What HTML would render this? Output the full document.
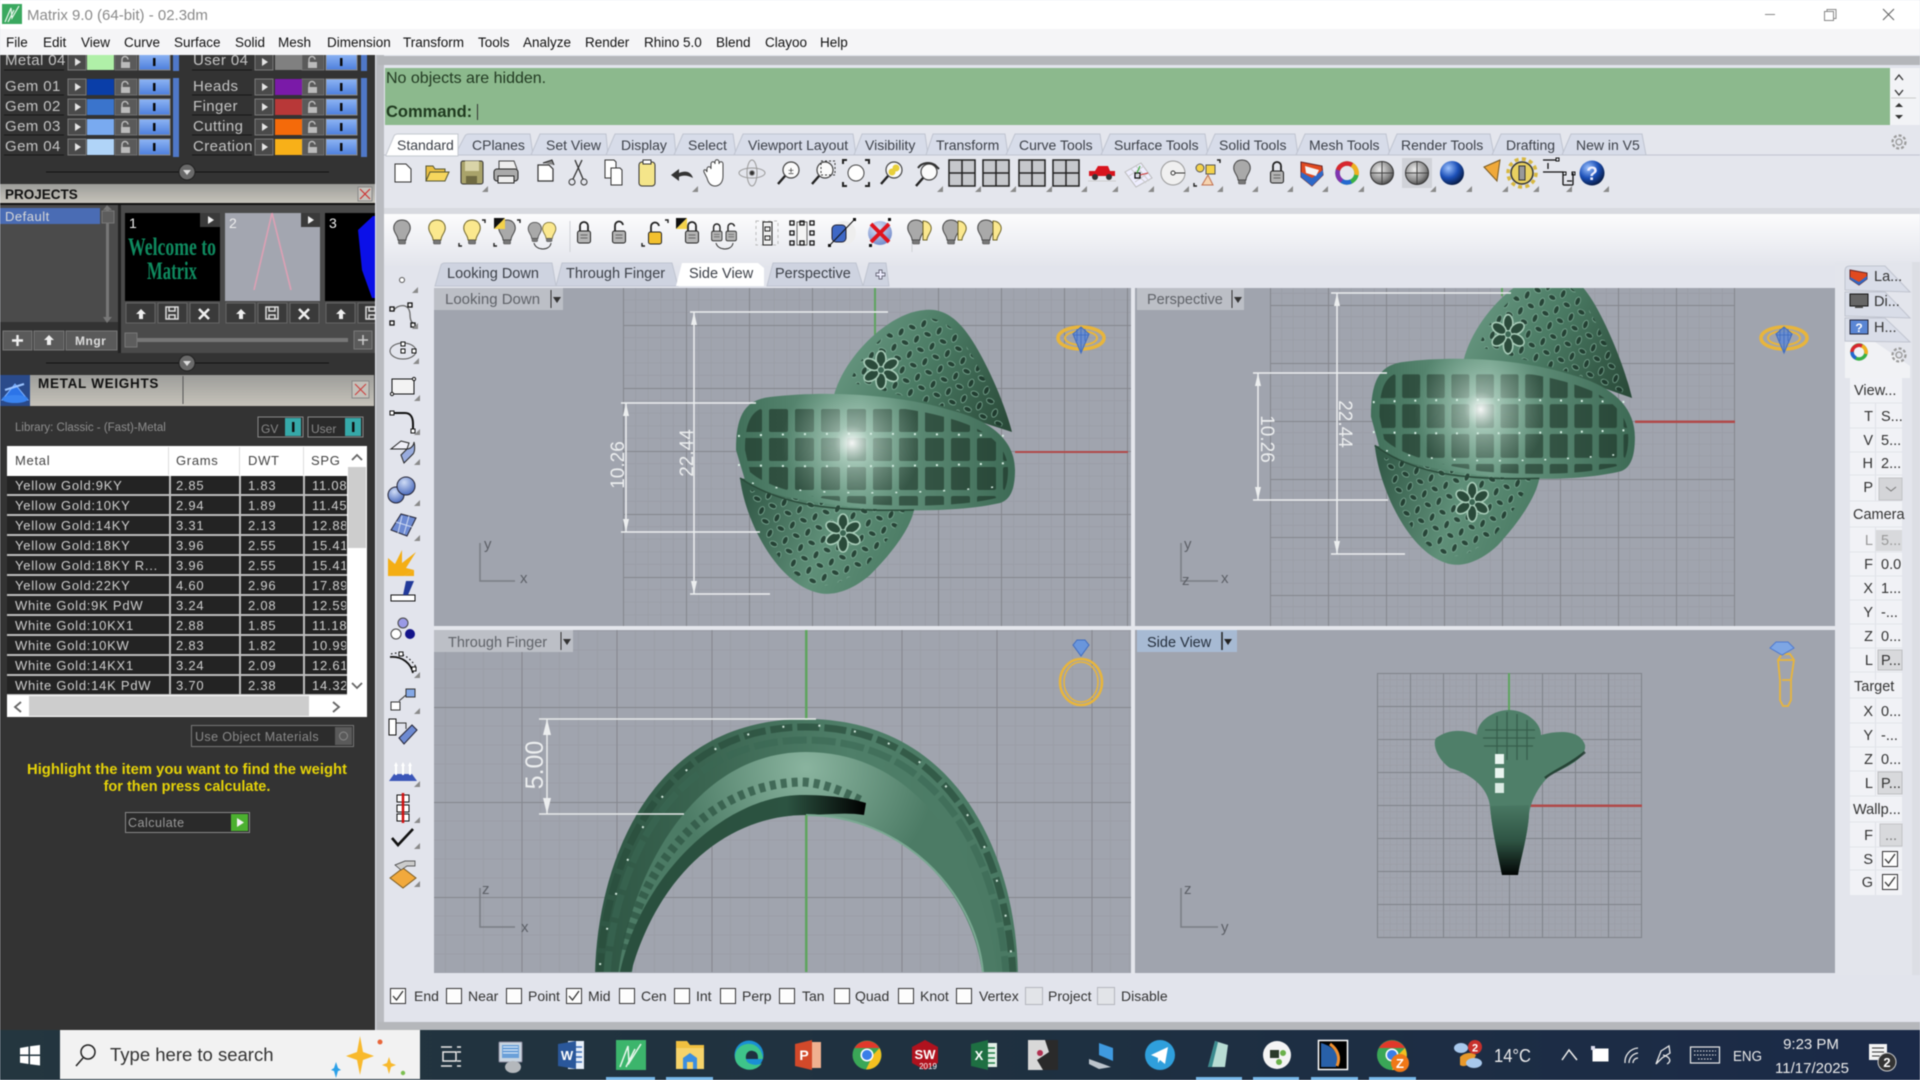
<!DOCTYPE html>
<html><head><meta charset="utf-8"><title>Matrix 9.0</title>
<style>
html,body{margin:0;padding:0;width:1920px;height:1080px;overflow:hidden;background:#e2e4ec}
svg{display:block;position:absolute;left:0;top:0;filter:blur(.4px)}
text{font-family:"Liberation Sans",sans-serif;font-size:14px;fill:#333;white-space:pre}
.m text{font-size:13.5px;fill:#111}
.lb text{font-size:15px;fill:#c4c4c4;letter-spacing:.4px}
.t text{font-size:14px;fill:#3c4048}
.tb text{font-size:13px;fill:#cfcfcf;letter-spacing:.75px}
.o text{font-size:14px;fill:#333}
.p text{font-size:14.5px;fill:#333}
</style></head><body>
<svg width="1920" height="1080" viewBox="0 0 1920 1080" xmlns="http://www.w3.org/2000/svg">
<defs>
<linearGradient id="hdr" x1="0" y1="0" x2="0" y2="1"><stop offset="0" stop-color="#9d9d9a"/><stop offset="1" stop-color="#c6c3ba"/></linearGradient>
<linearGradient id="bl" x1="0" y1="0" x2="0" y2="1"><stop offset="0" stop-color="#8db4f4"/><stop offset="1" stop-color="#4d7fdc"/></linearGradient>
<linearGradient id="rowb" x1="0" y1="0" x2="0" y2="1"><stop offset="0" stop-color="#fcfcfd"/><stop offset="1" stop-color="#e3e5ec"/></linearGradient>
<linearGradient id="tb" x1="0" y1="0" x2="1" y2="0"><stop offset="0" stop-color="#24363f"/><stop offset=".5" stop-color="#1f3140"/><stop offset="1" stop-color="#1b2a48"/></linearGradient>
<linearGradient id="bandG" gradientUnits="userSpaceOnUse" x1="736" y1="0" x2="1015" y2="0"><stop offset="0" stop-color="#41705a"/><stop offset=".45" stop-color="#6b9a84"/><stop offset="1" stop-color="#3d6a55"/></linearGradient>
<linearGradient id="lobeT" gradientUnits="userSpaceOnUse" x1="840" y1="320" x2="1010" y2="420"><stop offset="0" stop-color="#6d9c86"/><stop offset=".5" stop-color="#4a7a63"/><stop offset="1" stop-color="#2a4a39"/></linearGradient>
<linearGradient id="lobeB" gradientUnits="userSpaceOnUse" x1="745" y1="500" x2="910" y2="560"><stop offset="0" stop-color="#345b49"/><stop offset=".5" stop-color="#5f8f78"/><stop offset="1" stop-color="#4a7a63"/></linearGradient>
<radialGradient id="hl" gradientUnits="userSpaceOnUse" cx="852" cy="443" r="70"><stop offset="0" stop-color="#fff" stop-opacity=".95"/><stop offset=".25" stop-color="#d8efe4" stop-opacity=".55"/><stop offset="1" stop-color="#a8d0bc" stop-opacity="0"/></radialGradient>
<linearGradient id="slot" gradientUnits="userSpaceOnUse" x1="640" y1="0" x2="866" y2="0"><stop offset="0" stop-color="#2a4f3e"/><stop offset=".65" stop-color="#2c5341"/><stop offset="1" stop-color="#000"/></linearGradient>
<radialGradient id="mid" gradientUnits="userSpaceOnUse" cx="806" cy="768" r="130"><stop offset="0" stop-color="#8ab49f"/><stop offset="1" stop-color="#4c7b65"/></radialGradient>
<linearGradient id="archR" gradientUnits="userSpaceOnUse" x1="595" y1="0" x2="1018" y2="0"><stop offset="0" stop-color="#2f5644"/><stop offset=".25" stop-color="#3a6450"/><stop offset=".6" stop-color="#4f7f69"/><stop offset="1" stop-color="#4a7963"/></linearGradient>
<linearGradient id="stem" gradientUnits="userSpaceOnUse" x1="0" y1="800" x2="0" y2="875"><stop offset="0" stop-color="#4d7d67"/><stop offset=".55" stop-color="#2e5343"/><stop offset="1" stop-color="#020504"/></linearGradient>
<radialGradient id="bs" cx=".35" cy=".3" r=".8"><stop offset="0" stop-color="#9ec3ff"/><stop offset=".5" stop-color="#1c50b8"/><stop offset="1" stop-color="#03102c"/></radialGradient>
<radialGradient id="gs" cx=".4" cy=".35" r=".8"><stop offset="0" stop-color="#eee"/><stop offset=".6" stop-color="#888"/><stop offset="1" stop-color="#222"/></radialGradient>
<radialGradient id="bb" cx=".4" cy=".3" r=".8"><stop offset="0" stop-color="#cfdcf6"/><stop offset="1" stop-color="#3b5db5"/></radialGradient>

<pattern id="g1" patternUnits="userSpaceOnUse" x="623" y="325" width="63" height="63"><path d="M12.6 0V63M25.2 0V63M37.8 0V63M50.4 0V63M0 12.6H63M0 25.2H63M0 37.8H63M0 50.4H63" stroke="#999ca5" stroke-width=".7" fill="none"/><path d="M.5 0V63M0 .5H63" stroke="#84878e" fill="none"/></pattern>
<pattern id="g2" patternUnits="userSpaceOnUse" x="1270" y="305" width="58" height="58"><path d="M11.6 0V58M23.2 0V58M34.8 0V58M46.4 0V58M0 11.6H58M0 23.2H58M0 34.8H58M0 46.4H58" stroke="#999ca5" stroke-width=".7" fill="none"/><path d="M.5 0V58M0 .5H58" stroke="#84878e" fill="none"/></pattern>
<pattern id="g3" patternUnits="userSpaceOnUse" x="521.5" y="707" width="95" height="95"><path d="M19 0V95M38 0V95M57 0V95M76 0V95M0 19H95M0 38H95M0 57H95M0 76H95" stroke="#999ca5" stroke-width=".7" fill="none"/><path d="M.5 0V95M0 .5H95" stroke="#84878e" fill="none"/></pattern>
<pattern id="g4" patternUnits="userSpaceOnUse" x="1377" y="673" width="33" height="33"><path d="M6.6 0V33M13.2 0V33M19.8 0V33M26.4 0V33M0 6.6H33M0 13.2H33M0 19.8H33M0 26.4H33" stroke="#989ba3" stroke-width=".5" fill="none"/><path d="M.5 0V33M0 .5H33" stroke="#80838a" fill="none"/></pattern>
<pattern id="cells" patternUnits="userSpaceOnUse" x="740" y="408" width="26" height="29"><rect x="3" y="1" width="19" height="23" rx="2" fill="#16291f" fill-opacity=".55"/></pattern>
<pattern id="lat" patternUnits="userSpaceOnUse" width="17" height="17" patternTransform="rotate(25)"><ellipse cx="5" cy="5" rx="2.6" ry="4.4" fill="#1c3529" fill-opacity=".8" stroke="#85b49e" stroke-width=".7"/><ellipse cx="13" cy="13" rx="4" ry="2.5" fill="#1c3529" fill-opacity=".8" stroke="#85b49e" stroke-width=".7"/></pattern>

<g id="flower"><g fill="#2a4a3a" stroke="#a9cdb9" stroke-width="1.6"><ellipse cx="0" cy="-11" rx="5" ry="8"/><ellipse cx="0" cy="-11" rx="5" ry="8" transform="rotate(60)"/><ellipse cx="0" cy="-11" rx="5" ry="8" transform="rotate(120)"/><ellipse cx="0" cy="-11" rx="5" ry="8" transform="rotate(180)"/><ellipse cx="0" cy="-11" rx="5" ry="8" transform="rotate(240)"/><ellipse cx="0" cy="-11" rx="5" ry="8" transform="rotate(300)"/></g><circle r="3" fill="#3b6552"/></g>

<g id="ring">
<path d="M834,395C845,355 890,312 925,310C945,308 960,320 975,345C990,370 1005,405 1012,432L950,412Z" fill="url(#lobeT)"/>
<path d="M850,382C862,350 895,322 925,318C945,318 958,332 970,352C985,378 998,405 1006,428L950,408Z" fill="url(#lat)"/>
<use href="#flower" x="881" y="370"/>
<path d="M740,478C745,520 775,580 815,592C830,597 850,592 870,575C890,555 910,530 914,510Z" fill="url(#lobeB)"/>
<path d="M748,490C755,525 782,575 815,585C830,588 848,580 866,566C880,550 896,530 905,510Z" fill="url(#lat)"/>
<use href="#flower" x="843" y="533"/>
<path d="M736,450C736,415 745,400 770,397C830,390 900,395 950,410C990,420 1015,440 1015,470C1015,490 1010,500 1000,503C960,512 900,512 850,507C800,500 760,495 745,480Z" fill="url(#bandG)"/>
<path d="M745,450C745,420 752,408 772,406C830,400 900,404 948,418C985,428 1008,445 1008,470C1008,485 1004,496 996,498C960,507 900,507 852,503C805,496 768,488 750,472Z" fill="url(#cells)"/>
<path d="M738,436C800,433 900,433 1012,436M738,465C800,467 900,467 1012,463" fill="none" stroke="#d8efe4" stroke-width="2" stroke-dasharray="2 20"/>
<path d="M752,483C800,495 900,496 1006,486" fill="none" stroke="#d8efe4" stroke-width="1.5" stroke-dasharray="2 22"/>
<path d="M736,450C736,415 745,400 770,397C830,390 900,395 950,410C990,420 1015,440 1015,470C1015,490 1010,500 1000,503C960,512 900,512 850,507C800,500 760,495 745,480Z" fill="url(#hl)"/>
<path d="M740,478C780,505 830,512 914,510" fill="none" stroke="#2a4a3a" stroke-width="1.5"/>
</g>

<g id="gumA"><ellipse rx="23" ry="11" fill="none" stroke="#e8b53c" stroke-width="3.5"/><ellipse rx="16" ry="7" fill="none" stroke="#e8b53c" stroke-width="2"/><path d="M-8,-4L0,-11L8,-4L0,15Z" fill="#5f8ad6" fill-opacity=".85" stroke="#3f6cc0"/><path d="M-4,-9V3M0,-11V15M4,-9V3M-8,-3H8" stroke="#3f6cc0" fill="none" stroke-width=".8"/></g>

<polygon id="fly" points="0,6 6,6 6,0" fill="#8a8a8a"/>
<g id="bG"><path d="M0,-12C-7,-12-9,-6-8,-2C-7,2-4,4-4,8L4,8C4,4 7,2 8,-2C9,-6 7,-12 0,-12Z" fill="#a9a9a9" stroke="#444"/><rect x="-3.5" y="8" width="7" height="4" rx="1" fill="#777" stroke="#444" stroke-width=".6"/></g>
<g id="bY"><path d="M0,-12C-7,-12-9,-6-8,-2C-7,2-4,4-4,8L4,8C4,4 7,2 8,-2C9,-6 7,-12 0,-12Z" fill="#fbe88e" stroke="#6f6428"/><rect x="-3.5" y="8" width="7" height="4" rx="1" fill="#777" stroke="#444" stroke-width=".6"/></g>
<g id="lk"><path d="M-4,-1V-6a4,4 0 0 1 8,0V-1" fill="none" stroke="#222" stroke-width="1.8"/><rect x="-6.5" y="-1" width="13" height="12" rx="2" fill="#b4b4b4" stroke="#222"/><path d="M-3.5,3H3.5M-3.5,6H3.5" stroke="#666"/></g>
<g id="lko"><path d="M-4,-1V-6a4,4 0 0 1 8,-1" fill="none" stroke="#222" stroke-width="1.8"/><rect x="-6.5" y="-1" width="13" height="12" rx="2" fill="#b4b4b4" stroke="#222"/><path d="M-3.5,3H3.5M-3.5,6H3.5" stroke="#666"/></g>
<g id="win4"><rect x="-13" y="-13" width="26" height="26" fill="#c6c8cc" stroke="#222" stroke-width="1.5"/><path d="M0,-13V13M-13,0H13" stroke="#222" stroke-width="1.5"/></g>
<g id="zoomg"><circle cx="2" cy="-3" r="8" fill="#fbfbfb" stroke="#444" stroke-width="1.2"/><path d="M-4,3L-11,11" stroke="#222" stroke-width="2.4"/></g>
<g id="corner"><path d="M-13,10V13H-10M10,-13H13V-10" stroke="#222" stroke-width="1.4" fill="none"/></g>

<g id="ctl">
<rect x="0" y="0" width="18" height="16" fill="#4a4a4a" stroke="#7a7a7a"/><polygon points="7,4 13,8 7,12" fill="#e4e4e4"/>
<rect x="47" y="0" width="22" height="16" fill="#5a5a5a" stroke="#6f6f6f"/><path d="M54,8V5.5a3,3 0 0 1 6,0" fill="none" stroke="#bbb" stroke-width="1.4"/><rect x="53" y="8" width="9" height="6" fill="#bbb"/>
<rect x="71" y="0" width="31" height="16" fill="url(#bl)" stroke="#8a8a8a"/><rect x="85" y="4" width="2.5" height="8" fill="#0a0a0a"/>
</g>
<g id="tbtn"><rect width="29" height="20" fill="#3a3a3a" stroke="#666"/></g>
<path id="up" d="M0,-5L5,0H2V5H-2V0H-5Z" fill="#eee"/>
<path id="flop" d="M-6,-6H6V6H-6Z M-3,-6V-2H3V-6M-3,6V2H3V6" fill="none" stroke="#ddd" stroke-width="1.5"/>
<path id="xx" d="M-5,-5L5,5M5,-5L-5,5" stroke="#eee" stroke-width="2.6" fill="none"/>
<g id="cb"><rect x=".5" y=".5" width="15" height="15" fill="#fdfdfd" stroke="#333"/></g>
<g id="cbc"><rect x=".5" y=".5" width="15" height="15" fill="#fdfdfd" stroke="#333"/><path d="M3,8L6.5,12L13,3" fill="none" stroke="#333" stroke-width="1.3"/></g>
<g id="cbg"><rect x=".5" y=".5" width="17" height="17" fill="#e2e4e8" stroke="#b4b6bc"/></g>
<g id="cp"><path d="M-6,-8H5L9,-4V8H-6Z" fill="#fff" stroke="#333" stroke-width="1.2"/></g>
<clipPath id="c1"><rect x="434" y="288" width="697" height="338"/></clipPath>
<clipPath id="c2"><rect x="1135" y="288" width="700" height="338"/></clipPath>
<clipPath id="c3"><rect x="434" y="630" width="697" height="342"/></clipPath>
<clipPath id="spg"><rect x="305" y="476" width="41" height="220"/></clipPath>
<clipPath id="leftc"><rect x="0" y="55" width="375" height="975"/></clipPath>
</defs>

<!-- base -->
<rect width="1920" height="1080" fill="#e2e4ec"/>
<rect x="376" y="55" width="8" height="975" fill="#b9bbc0"/>
<rect x="378" y="56" width="1542" height="9" fill="#b4b6ba"/>

<!-- LEFT PANEL -->
<rect x="0" y="55" width="375" height="975" fill="#333333"/>
<g clip-path="url(#leftc)">
<g class="lb">
<text x="5" y="65">Metal 04</text><text x="193" y="65">User 04</text>
<text x="5" y="91">Gem 01</text><text x="5" y="111">Gem 02</text><text x="5" y="131">Gem 03</text><text x="5" y="151">Gem 04</text>
<text x="193" y="91">Heads</text><text x="193" y="111">Finger</text><text x="193" y="131">Cutting</text><text x="193" y="151">Creation</text>
</g>
<path d="M4,70H64M4,95H64M4,115H64M4,135H64M4,155H64M192,70H252M192,95H252M192,115H252M192,135H252M192,155H252" stroke="#181818"/>
<use href="#ctl" x="68" y="54"/><use href="#ctl" x="68" y="79"/><use href="#ctl" x="68" y="99"/><use href="#ctl" x="68" y="119"/><use href="#ctl" x="68" y="139"/>
<use href="#ctl" x="255" y="54"/><use href="#ctl" x="255" y="79"/><use href="#ctl" x="255" y="99"/><use href="#ctl" x="255" y="119"/><use href="#ctl" x="255" y="139"/>
<rect x="87" y="54" width="27" height="16" fill="#b0f0a8"/><rect x="87" y="79" width="27" height="16" fill="#0a3ea8"/><rect x="87" y="99" width="27" height="16" fill="#3a74cc"/><rect x="87" y="119" width="27" height="16" fill="#79aaf0"/><rect x="87" y="139" width="27" height="16" fill="#b0d4f8"/>
<rect x="275" y="54" width="27" height="16" fill="#808080"/><rect x="275" y="79" width="27" height="16" fill="#7a1aa8"/><rect x="275" y="99" width="27" height="16" fill="#b83838"/><rect x="275" y="119" width="27" height="16" fill="#f46a0a"/><rect x="275" y="139" width="27" height="16" fill="#f8b018"/>
<rect x="173" y="55" width="6" height="16" fill="#4f78c8"/><rect x="361" y="55" width="6" height="16" fill="#4f78c8"/><rect x="173" y="78" width="6" height="79" fill="#4f78c8"/><rect x="361" y="78" width="6" height="79" fill="#4f78c8"/>
<path d="M46,172H329" stroke="#111"/><circle cx="187" cy="172" r="8" fill="#6a6a6a" stroke="#222"/><polygon points="183,170 191,170 187,175" fill="#ddd"/>

<rect x="0" y="184" width="375" height="19" fill="url(#hdr)"/><rect x="0" y="203" width="375" height="2" fill="#111"/>
<text x="5" y="199" style="font-weight:bold;font-size:13.5px;fill:#111">PROJECTS</text>
<rect x="358" y="187" width="14" height="14" fill="#c6c3bc" stroke="#888"/><path d="M360,189L370,199M370,189L360,199" stroke="#c33" stroke-width="1.2"/>
<rect x="0" y="205" width="118" height="117" fill="#4b4b4b"/><rect x="118" y="205" width="3" height="150" fill="#222"/>
<rect x="0" y="208" width="100" height="16" fill="#4a6cb4"/><text x="5" y="221" style="font-size:13px;fill:#d8d8d8;letter-spacing:.5px">Default</text>
<rect x="106" y="210" width="3" height="108" fill="#777"/><rect x="102" y="211" width="12" height="12" fill="#5d5d5d" stroke="#777"/><polygon points="103,210 107,205 112,210" fill="#777"/><polygon points="103,317 112,317 107,323" fill="#777"/>
<rect x="121" y="205" width="254" height="150" fill="#4a4a4a"/>
<rect x="125" y="213" width="95" height="88" fill="#000"/><text x="172" y="255" text-anchor="middle" textLength="88" lengthAdjust="spacingAndGlyphs" style="font-family:'Liberation Serif',serif;font-size:25px;font-weight:bold;fill:#0f8a5f">Welcome to</text><text x="172" y="279" text-anchor="middle" textLength="50" lengthAdjust="spacingAndGlyphs" style="font-family:'Liberation Serif',serif;font-size:25px;font-weight:bold;fill:#0f8a5f">Matrix</text>
<text x="129" y="228" style="font-size:14px;fill:#eee">1</text><rect x="200" y="213" width="20" height="14" fill="#3a3a3a"/><polygon points="208,216 214,220 208,224" fill="#eee"/>
<rect x="225" y="213" width="95" height="88" fill="#a3a6b0"/><path d="M272,213L254,290M272,213L291,290" stroke="#dda0b4" stroke-width="1.6" fill="none"/><text x="229" y="228" style="font-size:14px;fill:#eee">2</text><rect x="301" y="213" width="19" height="14" fill="#3a3a3a"/><polygon points="308,216 314,220 308,224" fill="#eee"/>
<rect x="325" y="213" width="50" height="88" fill="#000"/><polygon points="358,230 373,216 375,216 375,298 372,298 362,270" fill="#0b10e8"/><text x="329" y="228" style="font-size:14px;fill:#eee">3</text>
<use href="#tbtn" x="126" y="303"/><use href="#tbtn" x="158" y="303"/><use href="#tbtn" x="190" y="303"/><use href="#tbtn" x="226" y="303"/><use href="#tbtn" x="258" y="303"/><use href="#tbtn" x="290" y="303"/><use href="#tbtn" x="326" y="303"/><use href="#tbtn" x="358" y="303"/>
<use href="#up" x="141" y="314"/><use href="#flop" x="172" y="313"/><use href="#xx" x="204" y="314"/><use href="#up" x="241" y="314"/><use href="#flop" x="272" y="313"/><use href="#xx" x="304" y="314"/><use href="#up" x="341" y="314"/><use href="#flop" x="372" y="313"/>
<rect x="3" y="331" width="29" height="19" fill="#5a5a5a" stroke="#777"/><path d="M17.5,335V346M12,340.5H23" stroke="#eee" stroke-width="2.4"/>
<rect x="34" y="331" width="30" height="19" fill="#5a5a5a" stroke="#777"/><use href="#up" x="49" y="340"/>
<rect x="66" y="331" width="51" height="19" fill="#5a5a5a" stroke="#777"/><text x="75" y="345" style="font-size:12px;font-weight:bold;fill:#ddd;letter-spacing:.5px">Mngr</text>
<rect x="128" y="338" width="220" height="4" fill="#777"/><rect x="125" y="333" width="12" height="14" fill="#5d5d5d" stroke="#777"/>
<rect x="354" y="331" width="18" height="18" fill="#5a5a5a" stroke="#777"/><path d="M363,335V345M358,340H368" stroke="#ccc" stroke-width="1.5"/>
<rect x="0" y="353" width="375" height="22" fill="#333"/>
<path d="M46,363H329" stroke="#111"/><circle cx="187" cy="363" r="8" fill="#6a6a6a" stroke="#222"/><polygon points="183,361 191,361 187,366" fill="#ddd"/>

<!-- Metal Weights -->
<rect x="30" y="375" width="344" height="31" fill="url(#hdr)"/><path d="M183,376V404" stroke="#555"/>
<rect x="0" y="375" width="30" height="31" fill="#2a4a8a"/><path d="M2,400L15,384L28,400Z" fill="#2c74e8" stroke="#7fb2ff"/><ellipse cx="15" cy="399" rx="13" ry="4" fill="#3a84f0"/><path d="M5,390L24,384" stroke="#9cc4ff" stroke-width="2"/>
<text x="38" y="388" style="font-weight:bold;font-size:13.5px;fill:#111;letter-spacing:.7px">METAL WEIGHTS</text>
<rect x="352" y="381" width="17" height="17" fill="#c4c1ba" stroke="#888"/><path d="M355,384L366,395M366,384L355,395" stroke="#c44" stroke-width="1.2"/>
<text x="15" y="431" style="font-size:11.5px;fill:#8e8e8e">Library: Classic - (Fast)-Metal</text>
<rect x="258" y="417" width="45" height="20" fill="#2a2a2a" stroke="#888"/><text x="261" y="433" style="font-size:12px;fill:#888">GV</text><rect x="285" y="418" width="16" height="18" fill="#36a9a9"/><rect x="292" y="422" width="2.5" height="10" fill="#111"/>
<rect x="308" y="417" width="55" height="20" fill="#2a2a2a" stroke="#888"/><text x="311" y="433" style="font-size:12px;fill:#888">User</text><rect x="345" y="418" width="16" height="18" fill="#36a9a9"/><rect x="352" y="422" width="2.5" height="10" fill="#111"/>

<rect x="7" y="446" width="360" height="271" fill="#fff"/>
<path d="M168.5,447V475M239.5,447V475M303.5,447V475" stroke="#ddd"/>
<text x="15" y="465" style="font-size:13px;fill:#444;letter-spacing:.7px">Metal</text><text x="176" y="465" style="font-size:13px;fill:#444;letter-spacing:.7px">Grams</text><text x="248" y="465" style="font-size:13px;fill:#444;letter-spacing:.7px">DWT</text><text x="311" y="465" style="font-size:13px;fill:#444;letter-spacing:.7px">SPG</text>
<rect x="7" y="476" width="340" height="219" fill="#bdbdbd"/>
<g fill="#232323">
<rect x="7" y="476" width="162" height="18"/><rect x="7" y="496" width="162" height="18"/><rect x="7" y="516" width="162" height="18"/><rect x="7" y="536" width="162" height="18"/><rect x="7" y="556" width="162" height="18"/><rect x="7" y="576" width="162" height="18"/><rect x="7" y="596" width="162" height="18"/><rect x="7" y="616" width="162" height="18"/><rect x="7" y="636" width="162" height="18"/><rect x="7" y="656" width="162" height="18"/><rect x="7" y="676" width="162" height="18"/>
<rect x="171" y="476" width="68" height="18"/><rect x="171" y="496" width="68" height="18"/><rect x="171" y="516" width="68" height="18"/><rect x="171" y="536" width="68" height="18"/><rect x="171" y="556" width="68" height="18"/><rect x="171" y="576" width="68" height="18"/><rect x="171" y="596" width="68" height="18"/><rect x="171" y="616" width="68" height="18"/><rect x="171" y="636" width="68" height="18"/><rect x="171" y="656" width="68" height="18"/><rect x="171" y="676" width="68" height="18"/>
<rect x="241" y="476" width="62" height="18"/><rect x="241" y="496" width="62" height="18"/><rect x="241" y="516" width="62" height="18"/><rect x="241" y="536" width="62" height="18"/><rect x="241" y="556" width="62" height="18"/><rect x="241" y="576" width="62" height="18"/><rect x="241" y="596" width="62" height="18"/><rect x="241" y="616" width="62" height="18"/><rect x="241" y="636" width="62" height="18"/><rect x="241" y="656" width="62" height="18"/><rect x="241" y="676" width="62" height="18"/>
<rect x="305" y="476" width="42" height="18"/><rect x="305" y="496" width="42" height="18"/><rect x="305" y="516" width="42" height="18"/><rect x="305" y="536" width="42" height="18"/><rect x="305" y="556" width="42" height="18"/><rect x="305" y="576" width="42" height="18"/><rect x="305" y="596" width="42" height="18"/><rect x="305" y="616" width="42" height="18"/><rect x="305" y="636" width="42" height="18"/><rect x="305" y="656" width="42" height="18"/><rect x="305" y="676" width="42" height="18"/>
</g>
<g class="tb">
<text x="15" y="490">Yellow Gold:9KY</text><text x="15" y="510">Yellow Gold:10KY</text><text x="15" y="530">Yellow Gold:14KY</text><text x="15" y="550">Yellow Gold:18KY</text><text x="15" y="570">Yellow Gold:18KY R...</text><text x="15" y="590">Yellow Gold:22KY</text><text x="15" y="610">White Gold:9K PdW</text><text x="15" y="630">White Gold:10KX1</text><text x="15" y="650">White Gold:10KW</text><text x="15" y="670">White Gold:14KX1</text><text x="15" y="690">White Gold:14K PdW</text>
<text x="176" y="490">2.85</text><text x="176" y="510">2.94</text><text x="176" y="530">3.31</text><text x="176" y="550">3.96</text><text x="176" y="570">3.96</text><text x="176" y="590">4.60</text><text x="176" y="610">3.24</text><text x="176" y="630">2.88</text><text x="176" y="650">2.83</text><text x="176" y="670">3.24</text><text x="176" y="690">3.70</text>
<text x="248" y="490">1.83</text><text x="248" y="510">1.89</text><text x="248" y="530">2.13</text><text x="248" y="550">2.55</text><text x="248" y="570">2.55</text><text x="248" y="590">2.96</text><text x="248" y="610">2.08</text><text x="248" y="630">1.85</text><text x="248" y="650">1.82</text><text x="248" y="670">2.09</text><text x="248" y="690">2.38</text>
<g clip-path="url(#spg)"><text x="312" y="490">11.08</text><text x="312" y="510">11.45</text><text x="312" y="530">12.88</text><text x="312" y="550">15.41</text><text x="312" y="570">15.41</text><text x="312" y="590">17.89</text><text x="312" y="610">12.59</text><text x="312" y="630">11.18</text><text x="312" y="650">10.99</text><text x="312" y="670">12.61</text><text x="312" y="690">14.32</text></g>
</g>
<rect x="348" y="467" width="18" height="81" fill="#cdcdcd"/>
<path d="M352,460L357,455L362,460M352,683L357,688L362,683" fill="none" stroke="#666" stroke-width="1.8"/>
<rect x="29" y="696" width="280" height="20" fill="#cdcdcd"/>
<path d="M21,702L15,707L21,712M333,702L339,707L333,712" fill="none" stroke="#666" stroke-width="1.8"/>
<rect x="191.500" y="725.500" width="162" height="21" fill="#2c2c2c" stroke="#777"/><text x="195" y="741" style="font-size:12.5px;fill:#8a8a8a;letter-spacing:.4px">Use Object Materials</text><rect x="335" y="727" width="17" height="18" fill="#5a5a5a"/><circle cx="343.500" cy="736" r="4" fill="none" stroke="#8a8a8a"/>
<text x="187" y="774" text-anchor="middle" style="font-weight:bold;font-size:14.500px;fill:#e6d308" textLength="320" lengthAdjust="spacingAndGlyphs">Highlight the item you want to find the weight</text>
<text x="187" y="791" text-anchor="middle" style="font-weight:bold;font-size:14.500px;fill:#e6d308">for then press calculate.</text>
<rect x="125.500" y="812.500" width="124" height="20" fill="#2a2a2a" stroke="#888"/><text x="128" y="827" style="font-size:12.5px;fill:#999;letter-spacing:.5px">Calculate</text><rect x="231" y="814" width="17" height="17" fill="#4cb030"/><polygon points="237,818 244,822.500 237,827" fill="#f2f2f2"/>
</g>

<!-- TITLE + MENU -->
<rect x="0" y="0" width="1920" height="29" fill="#fff"/>
<rect x="2" y="4" width="20" height="20" fill="#3aa85f"/><path d="M5,22L11,8L12,18L19,6M8,22L14,10" stroke="#e8f6ec" stroke-width="1.2" fill="none"/>
<text x="27" y="20" style="font-size:15px;fill:#8a8a8a">Matrix 9.0 (64-bit) - 02.3dm</text>
<path d="M1765,14.500H1775" stroke="#888"/><rect x="1824.500" y="11.500" width="9" height="9" fill="none" stroke="#888"/><path d="M1827,11.500V9.500H1836V18.500H1834" fill="none" stroke="#888"/><path d="M1883,9L1894,20M1894,9L1883,20" stroke="#666" stroke-width="1.1"/>
<rect x="0" y="29" width="1920" height="26" fill="#f5f5f7"/>
<g class="m"><text x="6" y="47">File</text><text x="43" y="47">Edit</text><text x="81" y="47">View</text><text x="124" y="47">Curve</text><text x="174" y="47">Surface</text><text x="235" y="47">Solid</text><text x="278" y="47">Mesh</text><text x="327" y="47">Dimension</text><text x="403" y="47">Transform</text><text x="478" y="47">Tools</text><text x="523" y="47">Analyze</text><text x="585" y="47">Render</text><text x="644" y="47">Rhino 5.0</text><text x="716" y="47">Blend</text><text x="765" y="47">Clayoo</text><text x="820" y="47">Help</text></g>

<!-- COMMAND -->
<rect x="385" y="68" width="1505" height="57" fill="#8cb98d"/>
<text x="386" y="83" style="font-size:16px;fill:#223a22">No objects are hidden.</text>
<text x="386" y="117" style="font-size:16.500px;font-weight:bold;fill:#1f3a1f">Command:</text>
<rect x="477" y="104" width="1" height="16" fill="#333"/>
<rect x="1890" y="68" width="30" height="57" fill="#f2f3f6"/>
<path d="M1895,80L1899,75L1903,80M1895,90L1899,95L1903,90" fill="none" stroke="#333" stroke-width="1.3"/>
<polygon points="1895,107 1899,103 1903,107" fill="#333"/><polygon points="1895,115 1903,115 1899,119" fill="#333"/>
<path d="M1891,98H1916" stroke="#ccc"/>

<!-- TOOL TABS -->
<rect x="384" y="125" width="1536" height="85" fill="#e4e6ed"/>
<rect x="384" y="208" width="1536" height="6" fill="#d8dae0"/>
<rect x="384" y="214" width="1536" height="52" fill="url(#rowb)"/>
<g fill="#d7dce9" stroke="#bfc4d0">
<path d="M455,155L465,136Q466,134 469,134H530L533,155Z"/><path d="M531,155L540,134H606L608,155Z"/><path d="M606,155L615,134H674L676,155Z"/><path d="M674,155L683,134H733L736,155Z"/><path d="M734,155L743,134H853L856,155Z"/><path d="M854,155L862,134H925L928,155Z"/><path d="M926,155L933,134H1005L1008,155Z"/><path d="M1006,155L1015,134H1100L1103,155Z"/><path d="M1101,155L1110,134H1205L1208,155Z"/><path d="M1206,155L1215,134H1295L1298,155Z"/><path d="M1296,155L1305,134H1386L1390,155Z"/><path d="M1388,155L1397,134H1490L1494,155Z"/><path d="M1492,155L1501,134H1560L1564,155Z"/><path d="M1562,155L1571,134H1642L1646,155Z"/>
</g>
<path d="M384,155H1920" stroke="#c0c4d0"/>
<path d="M386,155L394,136Q395,134 398,134H458V156H386Z" fill="#fff" stroke="#c4c8d0"/>
<g class="t"><text x="397" y="150">Standard</text><text x="472" y="150">CPlanes</text><text x="546" y="150">Set View</text><text x="621" y="150">Display</text><text x="688" y="150">Select</text><text x="748" y="150">Viewport Layout</text><text x="865" y="150">Visibility</text><text x="936" y="150">Transform</text><text x="1019" y="150">Curve Tools</text><text x="1114" y="150">Surface Tools</text><text x="1219" y="150">Solid Tools</text><text x="1309" y="150">Mesh Tools</text><text x="1401" y="150">Render Tools</text><text x="1506" y="150">Drafting</text><text x="1576" y="150">New in V5</text></g>
<g transform="translate(1899,142)" fill="none" stroke="#9a9a9a" stroke-width="1.3"><circle r="3"/><circle r="6.500" stroke-dasharray="3 2" stroke-width="2.200"/></g>

<!-- ICONS ROW 1 -->
<path d="M395,164H406L411,169V182H395Z" fill="#fff" stroke="#333"/>
<g transform="translate(437,173)"><path d="M-11,8V-7H-4L-2,-4H8V0" fill="#e9bf42" stroke="#553"/><path d="M-11,8L-7,-1H12L8,8Z" fill="#f6d65d" stroke="#553"/></g>
<g transform="translate(472,173)"><rect x="-11" y="-12" width="22" height="23" rx="2" fill="#a9a36a" stroke="#333"/><rect x="-7" y="-12" width="14" height="10" fill="#d9d4a8"/><rect x="-6" y="3" width="11" height="8" fill="#6f6a42"/></g><use href="#fly" x="482" y="186"/>
<g transform="translate(506,173)"><path d="M-7,-4V-12H8L11,-4" fill="#eee" stroke="#444"/><rect x="-12" y="-4" width="24" height="12" rx="3" fill="#aaa" stroke="#222"/><rect x="-8" y="3" width="16" height="7" fill="#eee" stroke="#222"/></g>
<g transform="translate(544,173)"><use href="#cp"/><path d="M-1,-10L8,-13L10,-8" fill="#888" stroke="#222"/></g>
<g transform="translate(578,173)" stroke="#333" fill="none"><path d="M-3,-13L5,6M4,-13L-5,6" stroke-width="1.3"/><circle cx="-6" cy="9" r="3"/><circle cx="6" cy="9" r="3"/></g>
<g transform="translate(613,173)"><path d="M-8,-13H1L3,-11V5H-8Z" fill="#fff" stroke="#333"/><path d="M-2,-5H7L9,-3V12H-2Z" fill="#fff" stroke="#333"/></g>
<g transform="translate(647,173)"><rect x="-8" y="-11" width="16" height="24" rx="3" fill="#f4e58a" stroke="#333"/><rect x="-4" y="-13" width="8" height="4" fill="#fff" stroke="#333"/></g>
<g transform="translate(682,175)"><path d="M-11,0L-3,-6V-2C4,-5 9,-3 11,3C6,0 0,0 -3,2V6Z" fill="#333"/></g><use href="#fly" x="692" y="186"/>
<g transform="translate(715,173)" fill="#fff" stroke="#444"><path d="M-8,-1V-4C-8,-7-4,-7-4,-4V-9C-4,-12 0,-12 0,-9V-11C0,-14 4,-14 4,-11V-9C4,-12 8,-12 8,-9V3C8,10 4,13 0,13C-5,13-7,9-8,5L-11,-1C-12,-4-9,-4-8,-1Z"/></g>
<g transform="translate(752,173)" fill="none" stroke="#999"><ellipse rx="13" ry="5"/><ellipse rx="5" ry="13"/><circle r="2.500" fill="#333"/></g>
<g transform="translate(789,173)"><use href="#zoomg"/><text x="2" y="1" text-anchor="middle" style="font-size:10px;fill:#333">±</text></g>
<g transform="translate(823,173)"><use href="#zoomg"/><rect x="-2" y="-12" width="14" height="14" fill="none" stroke="#333" stroke-dasharray="2 2"/></g>
<g transform="translate(856,173)"><circle r="8" fill="#fff" stroke="#444"/><path d="M-13,-9V-13H-9M9,-13H13V-9M13,9V13H9M-9,13H-13V9" fill="none" stroke="#222" stroke-width="2"/></g>
<g transform="translate(892,173)"><use href="#zoomg"/><circle cx="4" cy="-5" r="3.500" fill="#e8cf3a"/><circle cx="0" cy="-1" r="3.500" fill="#e8cf3a"/></g>
<g transform="translate(927,175)"><use href="#zoomg"/><path d="M-9,-7C-5,-13 3,-13 8,-10L12,-6" fill="none" stroke="#333" stroke-width="2"/></g><use href="#fly" x="937" y="186"/>
<use href="#win4" x="962" y="173"/><use href="#fly" x="975" y="186"/><use href="#win4" x="996" y="173"/><use href="#fly" x="1010" y="186"/><use href="#win4" x="1032" y="173"/><use href="#fly" x="1046" y="186"/><use href="#win4" x="1066" y="173"/><use href="#fly" x="1081" y="186"/>
<g transform="translate(1102,173)"><path d="M-13,2V-2H-7L-4,-7H6L8,-2H13V3H-13Z" fill="#d8141e"/><circle cx="-7" cy="4" r="3" fill="#333"/><circle cx="7" cy="4" r="3" fill="#333"/><path d="M-14,8H14" stroke="#ccc"/></g><use href="#fly" x="1112" y="186"/>
<g transform="translate(1138,175)"><path d="M-13,-3L3,-12L14,3L-2,12Z" fill="#eef" stroke="#bbb"/><path d="M-7,-6L8,8M-2,-9L11,6M-9,1L6,-9M-3,7L10,-2" stroke="#ccc"/><rect x="-3" y="-2" width="5" height="5" fill="none" stroke="#111" stroke-width="1.3"/><path d="M2,0L10,-2" stroke="#c33"/><path d="M-1,-2L2,-9" stroke="#3a3"/></g><use href="#fly" x="1148" y="186"/>
<g transform="translate(1173,173)"><circle r="12" fill="#f0f0f0" stroke="#999"/><circle r="2" fill="#fff" stroke="#333"/><path d="M2,0H12" stroke="#333"/></g><use href="#fly" x="1183" y="186"/>
<g transform="translate(1207,173)"><circle cx="-7" cy="-5" r="4" fill="#f4d24a" stroke="#555"/><rect x="-1" y="-8" width="9" height="9" fill="#f4d24a" stroke="#555"/><polygon points="-5,12 1,2 6,12" fill="#f6d4b0" stroke="#c07050"/></g><use href="#corner" x="1207" y="173"/><use href="#fly" x="1217" y="186"/>
<use href="#bG" x="1242" y="172"/><use href="#fly" x="1252" y="186"/>
<use href="#lk" x="1277" y="172"/><use href="#fly" x="1287" y="186"/>
<g transform="translate(1312,173)"><path d="M-11,-11L10,-7L11,2L0,13L-11,4Z" fill="#e04a20" stroke="#622"/><path d="M-11,-1L0,5L11,-3V2L0,13L-11,4Z" fill="#2d68c8"/><path d="M-7,-7L7,-3L4,3L-6,0Z" fill="#f4f4f4"/></g><use href="#fly" x="1322" y="186"/>
<g transform="translate(1347,173)" fill="none" stroke-width="4.500"><circle r="9.500" stroke="#38b048"/><path d="M-9,-3A9.500,9.500 0 0 1 5,-8" stroke="#d8262e"/><path d="M5,-8A9.500,9.500 0 0 1 9.500,2" stroke="#f0b020"/><path d="M-5,8A9.500,9.500 0 0 1 -9,-3" stroke="#8034b0"/><path d="M4,8.500A9.500,9.500 0 0 1 -5,8" stroke="#2468d0"/></g><use href="#fly" x="1358" y="186"/>
<g transform="translate(1382,173)"><circle r="11.500" fill="url(#gs)" stroke="#333"/><path d="M0,-11V11M-11,0H11" stroke="#444" fill="none"/></g>
<g transform="translate(1417,173)"><rect x="-15" y="-15" width="30" height="30" fill="#d0d2d8"/><circle r="11.500" fill="url(#gs)" stroke="#333"/><path d="M0,-11V11M-11,0H11" stroke="#444" fill="none"/></g><use href="#fly" x="1430" y="186"/>
<circle cx="1452" cy="173" r="12" fill="url(#bs)"/><use href="#fly" x="1466" y="186"/>
<polygon points="1484,167 1500,160 1497,181" fill="#f0a93a" stroke="#7a5a20"/><use href="#fly" x="1502" y="186"/>
<g transform="translate(1522,173)"><circle r="11" fill="#e8d060" stroke="#333" stroke-width="1.500"/><circle r="14" fill="none" stroke="#d8b840" stroke-width="3.500" stroke-dasharray="4 3.300"/><rect x="-3" y="-7" width="6" height="14" fill="#999" stroke="#333"/></g><use href="#fly" x="1533" y="186"/>
<g transform="translate(1557,173)" fill="none" stroke="#111" stroke-width="1.300"><path d="M-14,-13H-1M-14,-1H6V12M6,12H16M-9,-10V-4M10,8H15M16,0V12"/><rect x="-1" y="-15" width="3" height="3" stroke-width="1"/><rect x="6" y="-1" width="3" height="3" stroke-width="1"/><rect x="15" y="-1" width="3" height="3" stroke-width="1"/></g><use href="#fly" x="1566" y="186"/>
<g transform="translate(1592,173)"><circle r="12.500" fill="url(#bs)"/><text x="0" y="7" text-anchor="middle" style="font-size:19px;font-weight:bold;fill:#eef">?</text></g><use href="#fly" x="1603" y="186"/>

<!-- ICONS ROW 2 -->
<use href="#bG" x="402" y="232"/><use href="#bY" x="437" y="232"/><use href="#bY" x="472" y="232"/><use href="#corner" x="472" y="233"/>
<use href="#bG" x="507" y="232"/><use href="#corner" x="507" y="233"/><polygon points="494,218 505,218 494,229" fill="#111"/><polygon points="505,218 505,229 494,229" fill="#f4d24a"/>
<g transform="translate(542,232) scale(.8)"><use href="#bG" x="-9"/><use href="#bY" x="9"/></g><path d="M534,243C536,251 550,251 551,243" fill="none" stroke="#333"/>
<path d="M570,221V252M912,221V252" stroke="#cfd1d6"/>
<use href="#lk" x="584" y="232"/><use href="#lko" x="619" y="232"/>
<g transform="translate(655,233)"><path d="M-4,-1V-6a4,4 0 0 1 8,-1" fill="none" stroke="#222" stroke-width="1.800"/><rect x="-6.500" y="-1" width="13" height="12" rx="2" fill="#f2c02e" stroke="#222"/></g><use href="#corner" x="655" y="233"/>
<use href="#lk" x="692" y="232"/><polygon points="676,218 687,218 676,229" fill="#111"/><polygon points="687,218 687,229 676,229" fill="#f4d24a"/>
<g transform="translate(724,232) scale(.8)"><use href="#lk" x="-9"/><use href="#lko" x="9"/></g><path d="M716,243C718,251 732,251 733,243" fill="none" stroke="#333"/>
<g transform="translate(767,233)" fill="none"><rect x="-11" y="-12" width="22" height="24" stroke="#bbb" stroke-dasharray="3 3"/><rect x="-4" y="-11" width="9" height="23" stroke="#222" fill="#eee"/><rect x="-2" y="-6" width="5" height="4" stroke="#222"/><rect x="-2" y="3" width="5" height="4" stroke="#222"/></g>
<g transform="translate(802,233)" fill="none"><rect x="-5" y="-11" width="10" height="23" stroke="#666" fill="#f4f4f4"/><path d="M-12,-12h4v4h-4zM-2,-12h4v4h-4zM8,-12h4v4h-4zM-12,-2h4v4h-4zM8,-2h4v4h-4zM-12,8h4v4h-4zM-2,8h4v4h-4zM8,8h4v4h-4z" stroke="#111" stroke-width="1.300"/></g>
<g transform="translate(842,233)"><circle cx="2" r="12" fill="#eee"/><rect x="-10" y="-8" width="14" height="17" rx="4" fill="#3e68c6" stroke="#223"/><path d="M-13,13L12,-13" stroke="#111"/><rect x="-14" y="11" width="3" height="3" fill="#111"/><rect x="11" y="-15" width="3" height="3" fill="#111"/></g>
<g transform="translate(880,233)"><circle r="12" fill="url(#bb)" opacity=".75"/><path d="M-9,-9L9,9M9,-9L-9,9" stroke="#e0141e" stroke-width="3.800"/><rect x="-11" y="11" width="3" height="3" fill="#111"/><rect x="8" y="-15" width="3" height="3" fill="#111"/></g>
<g transform="translate(921,232)"><use href="#bG" x="-5"/><path d="M2,-11C8,-11 11,-6 10,-2C9,2 6,4 6,8L2,8Z" fill="#fbe88e" stroke="#6f6428"/></g>
<g transform="translate(956,232)"><use href="#bG" x="-5"/><path d="M2,-11C8,-11 11,-6 10,-2C9,2 6,4 6,8L2,8Z" fill="#fbe88e" stroke="#6f6428"/></g>
<g transform="translate(991,232)"><use href="#bG" x="-5"/><path d="M2,-11C8,-11 11,-6 10,-2C9,2 6,4 6,8L2,8Z" fill="#fbe88e" stroke="#6f6428"/></g>

<!-- VIEWPORT TABS -->
<g fill="#ced3e0" stroke="#bfc4d0">
<path d="M435,286L441,265Q442,263 445,263H552L556,286Z"/><path d="M556,286L562,263H672L678,286Z"/><path d="M767,286L773,263H856L863,286Z"/><path d="M863,286L869,263H886L889,286Z"/>
</g>
<path d="M676,286L682,263H758L764,268V286Z" fill="#fff"/>
<g class="t"><text x="447" y="278" style="font-size:14.500px">Looking Down</text><text x="566" y="278" style="font-size:14.500px">Through Finger</text><text x="689" y="278" style="font-size:14.500px">Side View</text><text x="775" y="278" style="font-size:14.500px">Perspective</text></g>
<path d="M876,273h3v-3h3v3h3v3h-3v3h-3v-3h-3z" fill="#eef" stroke="#667" stroke-width=".9"/>

<!-- LEFT TOOLBAR -->
<circle cx="402" cy="280" r="2.500" fill="#fff" stroke="#555"/><use href="#fly" x="412" y="287"/>
<g transform="translate(403,315)" fill="none" stroke="#111" stroke-width="1.300"><path d="M-9,-5C-6,-10 6,-13 7,-1C7,4 8,7 10,8" stroke="#666"/><rect x="-13" y="-8" width="4" height="4" fill="#fff"/><rect x="5" y="-12" width="4" height="4" fill="#fff"/><rect x="-13" y="6" width="4" height="4" fill="#fff"/><rect x="8" y="8" width="4" height="4" fill="#fff"/></g><use href="#fly" x="412" y="323"/>
<g transform="translate(403,351)" fill="none" stroke="#555"><ellipse rx="13" ry="8"/><g stroke="#111" fill="#fff"><rect x="-2" y="-9" width="4" height="4"/><rect x="-2" y="-2" width="4" height="4"/><rect x="9" y="-2" width="4" height="4"/></g></g><use href="#fly" x="413" y="358"/>
<g transform="translate(403,387)"><rect x="-11" y="-8" width="22" height="15" fill="#f3f3f3" stroke="#111"/><circle cx="-11" cy="7" r="1.600" fill="#fff" stroke="#111"/><circle cx="11" cy="-8" r="1.600" fill="#fff" stroke="#111"/></g><use href="#fly" x="414" y="395"/>
<g transform="translate(403,421)" fill="none" stroke="#111" stroke-width="2"><path d="M-11,-8H2C8,-8 10,-3 10,3V9"/><rect x="-13" y="-10" width="4" height="4" fill="#fff" stroke-width="1"/><rect x="8" y="8" width="4" height="4" fill="#fff" stroke-width="1"/></g><use href="#fly" x="414" y="429"/>
<g transform="translate(403,452)"><path d="M-12,-3L-2,-11L6,-9L4,-3Z" fill="#f0f0f8" stroke="#222"/><path d="M4,-3C8,-3 11,-7 11,-10C12,-6 12,0 10,2L1,11L-2,3Z" fill="#99acde" stroke="#222"/></g><use href="#fly" x="414" y="459"/>
<g transform="translate(403,490)"><circle cx="-7" cy="5" r="8" fill="url(#bb)" stroke="#223"/><circle cx="3" cy="-4" r="9" fill="url(#bb)" stroke="#223"/></g><use href="#fly" x="414" y="500"/>
<g transform="translate(403,525)"><path d="M-12,5L-2,-11L13,-7L4,11Z" fill="#6d8ad2" stroke="#223"/><path d="M-7,-3L9,2M-1,-9L-5,8M6,-9L1,9" stroke="#cfdaf2"/></g><use href="#fly" x="414" y="535"/>
<polygon points="388,576 388,558 395,564 402,550 402,563 416,552 406,568 414,570 404,576" fill="#f4ae14"/><polygon points="388,576 414,576 414,570 404,576" fill="#f4ae14"/>
<g transform="translate(403,594)"><rect x="-12" y="1" width="24" height="6" fill="#fff" stroke="#111"/><polygon points="0,1 3,-13 11,-13 5,1" fill="#223a9a"/></g>
<g transform="translate(403,629)"><circle cy="-6" cx="0" r="5" fill="#9a9ae6" stroke="#444"/><circle cx="-7" cy="5" r="5" fill="#fff" stroke="#444"/><circle cx="7" cy="5" r="5" fill="#14148a"/></g>
<g transform="translate(403,664)" fill="none" stroke="#111" stroke-width="1.800"><path d="M-13,-7C0,-8 8,0 10,9"/><path d="M-12,-10C-4,-13 6,-8 13,3" stroke-dasharray="1.500 2.500" stroke-width="1.200"/><rect x="-4" y="-12" width="4" height="4" fill="#fff" stroke-width="1"/><rect x="9" y="3" width="4" height="4" fill="#fff" stroke-width="1"/></g><use href="#fly" x="414" y="672"/>
<g transform="translate(403,700)"><rect x="-12" y="2" width="9" height="8" fill="#fff" stroke="#333"/><rect x="3" y="-11" width="9" height="8" fill="#84a8e6" stroke="#333"/><path d="M-4,1L3,-5" stroke="#333"/></g><use href="#fly" x="414" y="708"/>
<g transform="translate(403,733)"><rect x="-14" y="-14" width="7" height="16" fill="#fff" stroke="#111"/><path d="M-4,5L9,-8L14,-3L1,11Z" fill="#6d8ad2" stroke="#223"/><path d="M-7,-10H3V-4" fill="none" stroke="#333"/></g>
<g transform="translate(403,772)"><path d="M-14,9L-9,2H9L14,9Z" fill="#3a55b8"/><path d="M-7,3V-8M0,3V-8M7,3V-8" stroke="#fff" stroke-width="2"/><path d="M-9,-6L-7,-10L-5,-6M-2,-6L0,-10L2,-6M5,-6L7,-10L9,-6" fill="#fff"/></g><use href="#fly" x="414" y="781"/>
<g transform="translate(403,808)"><g fill="#fff" stroke="#111"><rect x="-6" y="-13" width="12" height="7"/><rect x="-6" y="-3" width="12" height="7"/><rect x="-6" y="6" width="12" height="7"/></g><path d="M0,-15V15" stroke="#d01010" stroke-width="2.500"/></g><use href="#fly" x="414" y="817"/>
<path d="M392,838L398,845L413,829" fill="none" stroke="#111" stroke-width="2.600"/><use href="#fly" x="414" y="843"/>
<g transform="translate(403,874)"><polygon points="-13,4 0,-6 13,4 0,14" fill="#f1a93c" stroke="#7a5a20"/><path d="M-8,-9L2,-13H12V-8H4L-2,-4Z" fill="#ccc" stroke="#333" stroke-width=".7"/></g><use href="#fly" x="414" y="881"/>

<!-- VIEWPORTS -->
<rect x="434" y="288" width="697" height="338" fill="#a0a4ae"/>
<rect x="1135" y="288" width="700" height="338" fill="#a0a4ae"/>
<rect x="434" y="630" width="697" height="343" fill="#a0a4ae"/>
<rect x="1135" y="630" width="700" height="343" fill="#a0a4ae"/>

<!-- VP1 -->
<g clip-path="url(#c1)">
<rect x="623" y="288" width="508" height="338" fill="url(#g1)"/>
<rect x="874" y="288" width="2" height="65" fill="#5fa45f"/>
<rect x="1015" y="451" width="113" height="2" fill="#b04a4a"/>
<use href="#ring"/>
<g stroke="#eceeef" fill="none" stroke-width="1.500"><path d="M690,312H888M690,594H770M694,312V594M621,403H756M621,532H760M626,403V532"/></g>
<g fill="#eceeef"><polygon points="694,312 691,325 697,325"/><polygon points="694,594 691,581 697,581"/><polygon points="626,403 623,416 629,416"/><polygon points="626,532 623,519 629,519"/></g>
</g>
<text transform="translate(693,453) rotate(-90)" text-anchor="middle" style="fill:#eceeef;font-size:19px">22.44</text>
<text transform="translate(624,465) rotate(-90)" text-anchor="middle" style="fill:#eceeef;font-size:19px">10.26</text>
<path d="M480,543V581H515" fill="none" stroke="#7a7d84" stroke-width="1.500"/>
<text x="484" y="549" style="fill:#5c5f66;font-size:15px">y</text><text x="520" y="583" style="fill:#5c5f66;font-size:15px">x</text>
<use href="#gumA" x="1081" y="338"/>
<rect x="434" y="288" width="129" height="22" fill="#bcbfc6"/>
<text x="445" y="304" style="fill:#5f6268;font-size:15px">Looking Down</text><path d="M551,290V308" stroke="#333"/><polygon points="553,297 561,297 557,303" fill="#333"/>

<!-- VP2 -->
<g clip-path="url(#c2)">
<rect x="1270" y="288" width="465" height="338" fill="url(#g2)"/>
<rect x="1501" y="288" width="2" height="8" fill="#5fa45f"/>
<rect x="1635" y="420.500" width="100" height="2.500" fill="#b04a4a"/>
<use href="#ring" transform="matrix(.946,0,0,1.030,674.700,-46.900)"/>
<g stroke="#eceeef" fill="none" stroke-width="1.500"><path d="M1331,293H1511M1331,554H1405M1337,293V554M1253,373H1387M1253,500H1388M1258,373V500"/></g>
<g fill="#eceeef"><polygon points="1337,293 1334,306 1340,306"/><polygon points="1337,554 1334,541 1340,541"/><polygon points="1258,373 1255,386 1261,386"/><polygon points="1258,500 1255,487 1261,487"/></g>
</g>
<text transform="translate(1339,424) rotate(90)" text-anchor="middle" style="fill:#eceeef;font-size:19px">22.44</text>
<text transform="translate(1261,439) rotate(90)" text-anchor="middle" style="fill:#eceeef;font-size:19px">10.26</text>
<path d="M1181,543V581H1218" fill="none" stroke="#7a7d84" stroke-width="1.500"/>
<text x="1184" y="549" style="fill:#5c5f66;font-size:15px">y</text><text x="1221" y="583" style="fill:#5c5f66;font-size:15px">x</text><text x="1182" y="585" style="fill:#5c5f66;font-size:15px">z</text>
<use href="#gumA" x="1784" y="338"/>
<rect x="1137" y="288" width="107" height="22" fill="#bcbfc6"/>
<text x="1147" y="304" style="fill:#5f6268;font-size:14.500px">Perspective</text><path d="M1232,290V308" stroke="#333"/><polygon points="1234,297 1242,297 1238,303" fill="#333"/>

<!-- VP3 -->
<g clip-path="url(#c3)">
<rect x="434" y="630" width="697" height="343" fill="url(#g3)"/>
<path d="M595,980C595,880 640,719 806,719C960,719 1018,860 1018,980H983C975,890 900,815 806,815C710,815 640,890 631,980Z" fill="url(#archR)"/>
<path d="M600,975C602,885 648,727 806,727C955,727 1008,865 1013,975" fill="none" stroke="#2a4d3c" stroke-width="7" stroke-dasharray="22 5" opacity=".7"/>
<path d="M607,975C612,890 655,740 806,740C948,740 1000,870 1006,975" fill="none" stroke="#3b6753" stroke-width="7" stroke-dasharray="24 5" opacity=".6"/>
<path d="M600,965C615,880 650,729 806,725C955,729 1005,860 1012,965" fill="none" stroke="#d0e6da" stroke-width="2" stroke-dasharray="2 34"/>
<path d="M618,975C630,880 690,752 806,752C930,752 988,880 997,975H983C975,890 900,815 806,815C710,815 640,890 631,975Z" fill="url(#mid)"/>
<path d="M625,950C645,860 710,785 800,782C820,782 840,790 860,800" fill="none" stroke="#2f5644" stroke-width="9" stroke-dasharray="6 5" opacity=".75"/>
<path d="M620,972C640,880 720,797 800,795C830,795 850,798 866,803L864,815C845,812 825,815 806,815C730,815 660,870 631,972Z" fill="url(#slot)"/>
<path d="M806,815C900,815 975,890 983,972" fill="none" stroke="#7aa892" stroke-width="2"/>
<rect x="805" y="630" width="2.500" height="90" fill="#5fa45f"/><rect x="805" y="815" width="2.500" height="158" fill="#5fa45f"/>
<g stroke="#e8eaea" fill="none" stroke-width="1.500"><path d="M539,719H816M539,814H684M547,719V814"/></g>
<g fill="#eceeef"><polygon points="547,719 543,735 551,735"/><polygon points="547,814 543,798 551,798"/></g>
</g>
<text transform="translate(543,765) rotate(-90)" text-anchor="middle" style="fill:#eceeef;font-size:25px">5.00</text>
<path d="M480,888V927H515" fill="none" stroke="#7a7d84" stroke-width="1.500"/>
<text x="482" y="894" style="fill:#5c5f66;font-size:15px">z</text><text x="521" y="932" style="fill:#5c5f66;font-size:15px">x</text>
<g transform="translate(1081,682)"><ellipse rx="21" ry="23" fill="none" stroke="#e8b53c" stroke-width="2.500"/><ellipse rx="17" ry="20" fill="none" stroke="#e8b53c" stroke-width="1.500"/><polygon points="-8,-37 -4,-42 4,-42 8,-37 0,-26" fill="#6a96dc" stroke="#3f6cc0"/></g>
<rect x="434" y="630" width="139" height="22" fill="#bcbfc6"/>
<text x="448" y="647" style="fill:#5f6268;font-size:14.500px">Through Finger</text><path d="M561,632V650" stroke="#333"/><polygon points="563,639 571,639 567,645" fill="#333"/>

<!-- VP4 -->
<rect x="1377" y="673" width="265" height="265" fill="url(#g4)"/>
<rect x="1377.500" y="673.500" width="264" height="264" fill="none" stroke="#80838a"/>
<rect x="1508" y="673" width="2" height="38" fill="#5fa45f"/>
<rect x="1530" y="804.500" width="112" height="2.500" fill="#b04a4a"/>
<path d="M1477,735C1477,720 1495,710 1509,710C1525,710 1541,722 1541,735C1560,730 1580,730 1585,745C1587,760 1560,770 1550,775C1535,790 1530,805 1529,815C1527,840 1520,860 1518,875L1502,875C1498,855 1492,830 1490,806C1488,790 1475,775 1450,768C1438,760 1432,745 1436,738C1450,728 1465,730 1477,735Z" fill="#4f7f69"/>
<path d="M1490,806C1492,830 1498,855 1502,875H1518C1520,860 1527,840 1529,815L1529,805Z" fill="url(#stem)"/>
<path d="M1485,730H1535M1483,738H1535M1484,746H1533M1497,716V760M1507,712V760M1517,714V760M1527,720V760" stroke="#2a4a3a" stroke-width="1.300" opacity=".6" fill="none"/>
<path d="M1585,752C1570,765 1555,770 1545,778" fill="none" stroke="#1c3529" stroke-width="2.500" opacity=".8"/>
<rect x="1495" y="754" width="9" height="10" fill="#eaf5f0"/><rect x="1495" y="768" width="9" height="10" fill="#eaf5f0"/><rect x="1495" y="783" width="9" height="10" fill="#dcebe4"/>
<path d="M1181,888V927H1218" fill="none" stroke="#7a7d84" stroke-width="1.500"/>
<text x="1184" y="894" style="fill:#5c5f66;font-size:15px">z</text><text x="1221" y="932" style="fill:#5c5f66;font-size:15px">y</text>
<g fill="none" stroke="#e8b53c" stroke-width="1.800"><path d="M1778,660L1782,654H1790L1794,660L1791,680V700L1788,706H1783L1780,700V680Z"/><path d="M1778,660H1794M1782,680H1790"/></g>
<path d="M1770,648L1776,642H1788L1794,648L1782,655Z" fill="#7ea6e4" stroke="#4f7ad0"/>
<rect x="1137" y="630" width="100" height="22" fill="#a7bad3"/>
<text x="1147" y="647" style="font-size:14.500px;fill:#26303e">Side View</text><path d="M1222,632V650" stroke="#222" stroke-width="1.500"/><polygon points="1224,639 1232,639 1228,645" fill="#222"/>

<!-- viewport separators -->
<rect x="1131" y="288" width="4" height="686" fill="#e4e6ec"/>
<rect x="434" y="626" width="1401" height="4" fill="#e4e6ec"/>

<!-- OSNAP -->
<rect x="384" y="974" width="1536" height="48" fill="#e2e4ec"/>
<rect x="378" y="1022" width="1542" height="8" fill="#b5b7bb"/>
<use href="#cbc" x="390" y="988"/><use href="#cb" x="446" y="988"/><use href="#cb" x="506" y="988"/><use href="#cbc" x="566" y="988"/><use href="#cb" x="619" y="988"/><use href="#cb" x="674" y="988"/><use href="#cb" x="720" y="988"/><use href="#cb" x="779" y="988"/><use href="#cb" x="834" y="988"/><use href="#cb" x="898" y="988"/><use href="#cb" x="956" y="988"/><use href="#cbg" x="1025" y="987"/><use href="#cbg" x="1097" y="987"/>
<g class="o"><text x="414" y="1001">End</text><text x="468" y="1001">Near</text><text x="528" y="1001">Point</text><text x="588" y="1001">Mid</text><text x="641" y="1001">Cen</text><text x="696" y="1001">Int</text><text x="742" y="1001">Perp</text><text x="802" y="1001">Tan</text><text x="855" y="1001">Quad</text><text x="920" y="1001">Knot</text><text x="979" y="1001">Vertex</text><text x="1048" y="1001">Project</text><text x="1121" y="1001">Disable</text></g>

<!-- RIGHT PANEL -->
<rect x="1835" y="262" width="85" height="713" fill="#e3e5ec"/>
<rect x="1912" y="262" width="8" height="713" fill="#dcdee4"/>
<path d="M1845,290V271Q1845,266 1850,266H1885L1910,292Z" fill="#d9dde8" stroke="#c0c4cf"/>
<path d="M1845,316V292H1885L1910,318Z" fill="#d9dde8" stroke="#c0c4cf"/>
<path d="M1845,341V318H1885L1910,342Z" fill="#d9dde8" stroke="#c0c4cf"/>
<path d="M1845,365V342H1875L1910,366V378H1845Z" fill="#f1f2f5"/>
<g transform="translate(1859,276)"><path d="M-9,-6L8,-3L8,3L0,9L-9,3Z" fill="#e04a20" stroke="#622"/><path d="M-9,1L0,6L8,0V3L0,9L-9,3Z" fill="#2d68c8"/></g>
<g transform="translate(1859,301)"><rect x="-9" y="-7" width="18" height="12" fill="#666" stroke="#111"/><rect x="-4" y="5" width="8" height="2" fill="#444"/></g>
<g transform="translate(1859,327)"><rect x="-9" y="-7" width="18" height="14" fill="#5a86d4" stroke="#223"/><text x="0" y="5" text-anchor="middle" style="font-size:12px;font-weight:bold;fill:#fff">?</text></g>
<g transform="translate(1859,352)" fill="none" stroke-width="3.500"><circle r="7" stroke="#38b048"/><path d="M-7,0A7,7 0 0 1 3,-6" stroke="#d8262e"/><path d="M3,-6A7,7 0 0 1 7,2" stroke="#f0b020"/><path d="M-3,6A7,7 0 0 1 -7,0" stroke="#2468d0"/></g>
<g transform="translate(1899,355)" fill="none" stroke="#9a9a9a" stroke-width="1.300"><circle r="3"/><circle r="6.500" stroke-dasharray="3 2" stroke-width="2.200"/></g>
<rect x="1850" y="378" width="52" height="517" fill="#f1f2f6"/>
<path d="M1875.500,403V501M1875.500,527V680M1875.500,698V796M1875.500,822V895" stroke="#dfe1e6"/>
<path d="M1850,403H1902M1850,428H1902M1850,452H1902M1850,475H1902M1850,501H1902M1850,527H1902M1850,552H1902M1850,576H1902M1850,600H1902M1850,624H1902M1850,648H1902M1850,672H1902M1850,698H1902M1850,723H1902M1850,747H1902M1850,771H1902M1850,796H1902M1850,822H1902M1850,847H1902M1850,870H1902" stroke="#e2e4ea"/>
<rect x="1879" y="478" width="23" height="22" fill="#d4d5d8" stroke="#c2c3c6"/><path d="M1886,487L1891,491L1896,487" fill="none" stroke="#777"/>
<rect x="1876" y="530" width="26" height="21" fill="#d8d9dc"/>
<rect x="1878" y="650" width="24" height="20" fill="#d8d9dc" stroke="#bcbdc0"/><rect x="1878" y="772" width="24" height="22" fill="#d8d9dc" stroke="#bcbdc0"/><rect x="1880" y="824" width="22" height="22" fill="#d8d9dc" stroke="#c2c3c6"/>
<g class="p">
<text x="1854" y="395">View...</text>
<text x="1873" y="421" text-anchor="end">T</text><text x="1881" y="421">S...</text>
<text x="1873" y="445" text-anchor="end">V</text><text x="1881" y="445">5...</text>
<text x="1873" y="468" text-anchor="end">H</text><text x="1881" y="468">2...</text>
<text x="1873" y="492" text-anchor="end">P</text>
<text x="1853" y="519">Camera</text>
<text x="1873" y="545" text-anchor="end" style="fill:#999">L</text><text x="1881" y="545" style="fill:#999">5...</text>
<text x="1873" y="569" text-anchor="end">F</text><text x="1881" y="569">0.0</text>
<text x="1873" y="593" text-anchor="end">X</text><text x="1881" y="593">1...</text>
<text x="1873" y="617" text-anchor="end">Y</text><text x="1881" y="617">-...</text>
<text x="1873" y="641" text-anchor="end">Z</text><text x="1881" y="641">0...</text>
<text x="1873" y="665" text-anchor="end">L</text><text x="1881" y="665">P...</text>
<text x="1854" y="691">Target</text>
<text x="1873" y="716" text-anchor="end">X</text><text x="1881" y="716">0...</text>
<text x="1873" y="740" text-anchor="end">Y</text><text x="1881" y="740">-...</text>
<text x="1873" y="764" text-anchor="end">Z</text><text x="1881" y="764">0...</text>
<text x="1873" y="788" text-anchor="end">L</text><text x="1881" y="788">P...</text>
<text x="1853" y="814">Wallp...</text>
<text x="1873" y="840" text-anchor="end">F</text><text x="1885" y="840" style="fill:#777">...</text>
<text x="1873" y="864" text-anchor="end">S</text>
<text x="1873" y="887" text-anchor="end">G</text>
</g>
<g class="p"><text x="1874" y="281">La...</text><text x="1874" y="306">Di...</text><text x="1874" y="332">H...</text></g>
<use href="#cbc" x="1882" y="851"/><use href="#cbc" x="1882" y="874"/>

<!-- TASKBAR -->
<rect x="0" y="1030" width="1920" height="50" fill="url(#tb)"/>
<g fill="#fff"><polygon points="20,1048 28.500,1046.500 28.500,1054.500 20,1054.500"/><polygon points="30,1046.300 40,1045 40,1054.500 30,1054.500"/><polygon points="20,1056 28.500,1056 28.500,1064 20,1062.800"/><polygon points="30,1056 40,1056 40,1065.500 30,1064.200"/></g>
<rect x="60" y="1030" width="360" height="49" fill="#f2f2f2"/>
<g fill="none" stroke="#222" stroke-width="1.500"><circle cx="88" cy="1052" r="7"/><path d="M83,1058L76,1066"/></g>
<text x="110" y="1061" style="font-size:18.500px;fill:#333">Type here to search</text>
<polygon points="360,1036 363,1052 374,1056 363,1060 360,1075 357,1060 346,1056 357,1052" fill="#f8b92c"/>
<polygon points="389,1057 391,1063 396,1065 391,1067 389,1074 387,1067 382,1065 387,1063" fill="#f8b92c"/>
<polygon points="336,1062 338,1068 341,1070 338,1071 336,1078 334,1071 331,1070 334,1068" fill="#2aa0e8"/>
<circle cx="380" cy="1042" r="2.500" fill="#e8663a"/><circle cx="403" cy="1073" r="2.200" fill="#7cc050"/>
<g fill="none" stroke="#e8e8e8" stroke-width="1.500"><rect x="443" y="1052" width="13" height="9"/><path d="M441,1047H452M441,1066H452M457,1047H461M457,1052H461M457,1061H461M457,1066H461"/></g>
<g transform="translate(511,1055)"><rect x="-12" y="-13" width="23" height="20" rx="1" fill="#c8d4e0" stroke="#889"/><rect x="-9" y="-10" width="17" height="13" fill="#6aa0d8"/><path d="M-8,-8H7M-8,-5H7M-8,-2H7" stroke="#e4eefc"/><ellipse cx="2" cy="12" rx="8" ry="6" fill="#b4b8bc"/></g>
<g transform="translate(571,1055)"><path d="M-3,-14H13V14H-3Z" fill="#e8f0fa"/><path d="M2,-8H11M2,-3H11M2,2H11M2,7H11" stroke="#3a6cb8" stroke-width="1.500"/><path d="M-13,-11L5,-14V14L-13,11Z" fill="#2a579a"/><text x="-4" y="5" text-anchor="middle" style="font-size:13px;font-weight:bold;fill:#fff">W</text></g>
<g transform="translate(631,1055)"><rect x="-15" y="-15" width="30" height="30" fill="#3cb56c"/><path d="M-11,12L-3,-9L-2,8L10,-11M-5,12L4,-6" stroke="#e8f6ec" stroke-width="1.500" fill="none"/></g>
<g transform="translate(690,1055)"><path d="M-14,-14H-3L0,-10H14V14H-14Z" fill="#f0c040"/><rect x="-14" y="-7" width="28" height="21" fill="#f6d36a"/><path d="M-7,14V3L0,-2L7,3V14Z" fill="#3a8ee0"/><rect x="-3" y="7" width="6" height="7" fill="#f6d36a"/></g>
<g transform="translate(749,1055)"><circle r="14.500" fill="#1a8fd4"/><path d="M-14,2C-14,-10 0,-14 7,-9C13,-5 14,2 14,4H-3C-3,9 8,12 13,8C9,14 2,16-4,14C-10,12-14,8-14,2Z" fill="#3ec48a"/><path d="M-3,4C-4,-2 0,-5 4,-4C9,-3 9,1 9,4Z" fill="#1f3040"/></g>
<g transform="translate(808,1055)"><rect x="-2" y="-13" width="15" height="26" fill="#f0b090"/><path d="M-13,-11L4,-15V15L-13,11Z" fill="#d2492a"/><text x="-4" y="5" text-anchor="middle" style="font-size:14px;font-weight:bold;fill:#fff">P</text></g>
<g transform="translate(867,1055)"><circle r="14.500" fill="#3aa757"/><path d="M-12.500,-7A14.500,14.500 0 0 1 12.500,-7H0Z" fill="#e0392b"/><path d="M12.500,-7A14.500,14.500 0 0 1 -1,14.500L6,0Z" fill="#f4c020"/><circle r="6.500" fill="#fff"/><circle r="5" fill="#3a7ee8"/></g>
<g transform="translate(925,1055)"><polygon points="0,-15 13,-8 13,8 0,15 -13,8 -13,-8" fill="#b0121e"/><text x="0" y="4" text-anchor="middle" style="font-size:13px;font-weight:bold;fill:#fff">SW</text><text x="3" y="14" text-anchor="middle" style="font-size:8px;fill:#fff">2019</text></g>
<g transform="translate(984,1055)"><rect x="-1" y="-12" width="14" height="24" fill="#e4f1e8"/><path d="M3,-7H11M3,-2H11M3,3H11M3,8H11" stroke="#1e7d45" stroke-width="1.400"/><path d="M-13,-11L4,-15V15L-13,11Z" fill="#1e6f42"/><text x="-5" y="5" text-anchor="middle" style="font-size:13px;font-weight:bold;fill:#fff">X</text></g>
<g transform="translate(1043,1055)"><rect x="-15" y="-15" width="30" height="30" fill="#d8d8d8"/><path d="M2,-15H15V15H0L-6,5L6,-3Z" fill="#2a2a2a"/><circle cx="-3" cy="-2" r="3" fill="#b03050"/></g>
<g transform="translate(1101,1055)"><path d="M-2,-12L12,-7V6L-2,0Z" fill="#3f9ae0"/><path d="M-12,4L2,9L10,12L-2,14L-12,9Z" fill="#bcc4cc"/></g>
<g transform="translate(1160,1055)"><circle r="15" fill="#2f9fdc"/><path d="M-9,0L8,-8L5,9L0,5L-2,8L-2,3Z" fill="#fff"/></g>
<g transform="translate(1218,1055)"><path d="M-10,12L-3,-14L10,-10L7,12Z" fill="#b8dcd4"/><path d="M-10,12L-3,-14L0,-13L-6,12Z" fill="#3a8a8e"/></g>
<g transform="translate(1277,1055)"><circle r="14" fill="#f4f4f4"/><rect x="-7" y="-5" width="9" height="8" fill="#2a3a2a"/><circle cx="6" cy="-2" r="3" fill="#6ab04a"/><circle cx="2" cy="7" r="3" fill="#6ab04a"/></g>
<g transform="translate(1333,1055)"><rect x="-14.500" y="-14.500" width="29" height="29" fill="#000" stroke="#fff" stroke-width="1.500"/><path d="M-12,-12C2,-8 8,0 3,12H-12Z" fill="#2860a8"/><path d="M-3,-11C4,-6 8,2 4,11" stroke="#f09030" stroke-width="3" fill="none"/></g>
<g transform="translate(1392,1055)"><circle r="15" fill="#3aa757"/><path d="M-13,-7A15,15 0 0 1 13,-7H0Z" fill="#e0392b"/><path d="M13,-7A15,15 0 0 1 0,15L6,0Z" fill="#f4c020"/><circle r="6.500" fill="#fff"/><circle r="5" fill="#3a7ee8"/><circle cx="8" cy="8" r="9" fill="#f07818"/><text x="8" y="13" text-anchor="middle" style="font-size:13px;font-weight:bold;fill:#fff">Z</text></g>
<g transform="translate(1468,1055)"><ellipse cx="-7" cy="-7" rx="7" ry="5" fill="#a8c8ec"/><path d="M-8,2C-2,-4 6,-2 8,0C6,6-2,14-8,10Z" fill="#e8982a"/><ellipse cx="6" cy="8" rx="8" ry="5" fill="#a8c8ec"/><circle cx="7" cy="-8" r="7" fill="#c8302c"/><text x="7" y="-3.500" text-anchor="middle" style="font-size:11px;font-weight:bold;fill:#fff">2</text></g>
<text x="1494" y="1062" style="font-size:18.500px;fill:#eaeaea" textLength="37" lengthAdjust="spacingAndGlyphs">14°C</text>
<path d="M1562,1060L1569,1050L1577,1060" fill="none" stroke="#eee" stroke-width="1.500"/>
<g transform="translate(1600,1055)"><rect x="-7" y="-6" width="15" height="12" fill="#fff" stroke="#fff"/><rect x="-9" y="-9" width="4" height="4" fill="#dde"/></g>
<g transform="translate(1632,1055)" fill="none" stroke="#e8e8e8" stroke-width="1.300"><path d="M-7,8A14,14 0 0 1 6,-7M-3,8A10,10 0 0 1 6,-2M1,8A5,5 0 0 1 6,3"/></g>
<g transform="translate(1664,1055)" fill="none" stroke="#e8e8e8" stroke-width="1.300"><path d="M-8,9L-3,-4L5,-9L6,-2L-2,3Z"/><path d="M-1,0C6,2 8,6 3,9"/></g>
<g transform="translate(1705,1055)"><rect x="-14.500" y="-8" width="29" height="16" fill="none" stroke="#e8e8e8" stroke-width="1.200"/><path d="M-11,-4H11M-11,0H11M-7,4H7" stroke="#e8e8e8" stroke-dasharray="1.500 1.500"/></g>
<text x="1733" y="1061" style="font-size:14.500px;fill:#eaeaea" textLength="29" lengthAdjust="spacingAndGlyphs">ENG</text>
<text x="1811" y="1049" text-anchor="middle" style="font-size:15px;fill:#eaeaea">9:23 PM</text>
<text x="1812" y="1073" text-anchor="middle" style="font-size:15px;fill:#eaeaea">11/17/2025</text>
<g transform="translate(1878,1053)"><rect x="-9" y="-9" width="18" height="16" fill="#f4f4f4"/><path d="M-6,-5H6M-6,-1H6M-6,3H6" stroke="#333"/><circle cx="9" cy="9" r="9" fill="#333" stroke="#ccc"/><text x="9" y="14" text-anchor="middle" style="font-size:13px;font-weight:bold;fill:#fff">2</text></g>
<g fill="#77b8ea"><rect x="606" y="1077" width="49" height="3"/><rect x="666" y="1077" width="47" height="3"/><rect x="1196" y="1077" width="46" height="3"/><rect x="1253" y="1077" width="46" height="3"/><rect x="1311" y="1077" width="47" height="3"/><rect x="1369" y="1077" width="47" height="3"/></g>
</svg>
</body></html>
